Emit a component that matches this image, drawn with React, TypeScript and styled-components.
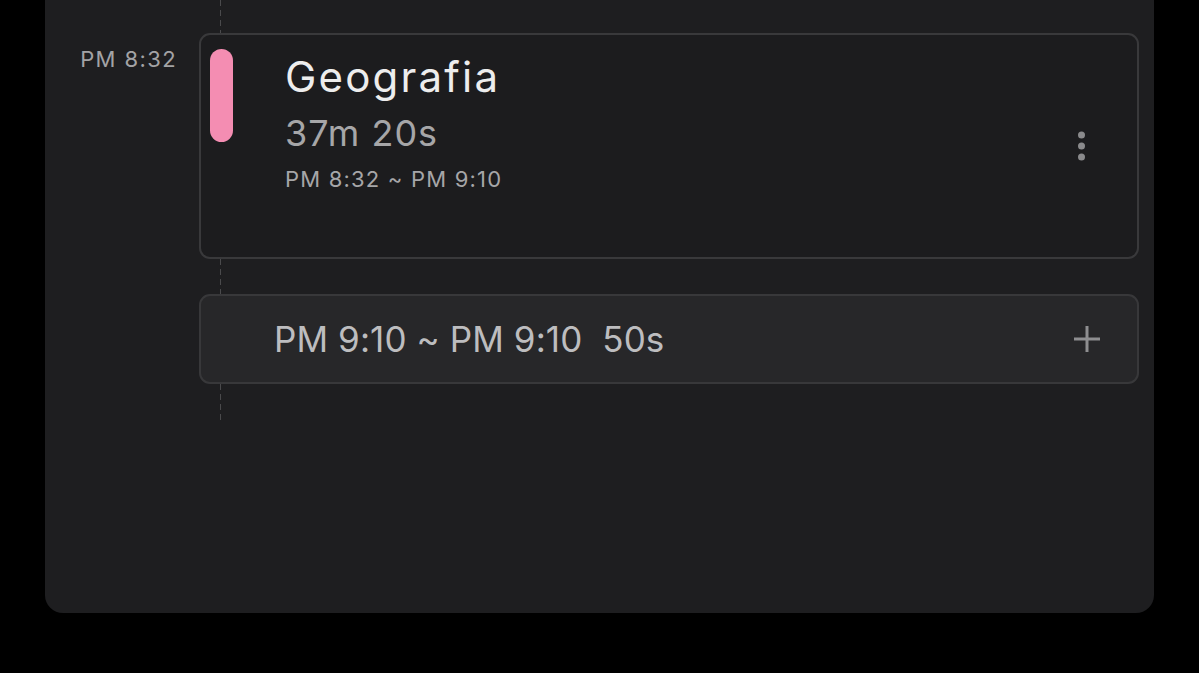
import React from "react";
import styled, { createGlobalStyle } from "styled-components";

const Global = createGlobalStyle`
  html, body { margin: 0; padding: 0; background: #000; }
  body { font-family: Inter, "Noto Sans", sans-serif; overflow: hidden; }
`;

const Page = styled.div`
  width: 1199px;
  height: 673px;
  background: #000;
  display: flex;
  align-items: flex-start;
  padding-left: 45px;
  box-sizing: border-box;
`;

const Panel = styled.div`
  width: 1109px;
  height: 613px;
  background: #1e1e20;
  border-radius: 0 0 18px 18px;
  display: flex;
  flex-direction: column;
`;

const ConnectorRow = styled.div<{ $h: number }>`
  height: ${(p) => p.$h}px;
  padding-left: 175px;
  display: flex;
`;

const Dash = styled.div`
  width: 1px;
  height: 100%;
  background: repeating-linear-gradient(
    to bottom,
    #4a4a4c 0 6px,
    transparent 6px 10px
  );
`;

const Row = styled.div`
  display: flex;
  align-items: flex-start;
`;

const TimeCol = styled.div`
  width: 154px;
  box-sizing: border-box;
  padding-right: 22px;
  padding-top: 13px;
  text-align: right;
  font-size: 22px;
  color: #a3a3a5;
  letter-spacing: 1.4px;
`;

const SessionCard = styled.div`
  width: 940px;
  height: 226px;
  box-sizing: border-box;
  border: 2px solid #39393b;
  border-radius: 11px;
  background: #1c1c1e;
  display: flex;
  align-items: flex-start;
  padding: 14px 0 0 9px;
  position: relative;
`;

const ColorBar = styled.div<{ $color: string }>`
  width: 23px;
  height: 93px;
  border-radius: 12px;
  background: ${(p) => p.$color};
  flex-shrink: 0;
`;

const Info = styled.div`
  margin-left: 52px;
  display: flex;
  flex-direction: column;
  flex: 1;
`;

const Title = styled.div`
  font-size: 42px;
  line-height: 56px;
  color: #ededed;
  font-weight: 400;
  letter-spacing: 2.2px;
`;

const Duration = styled.div`
  font-size: 36px;
  line-height: 40px;
  color: #a6a6a8;
  margin-top: 8px;
  letter-spacing: 1px;
`;

const Range = styled.div`
  font-size: 22px;
  line-height: 30px;
  color: #a6a6a8;
  margin-top: 11px;
  letter-spacing: 1.2px;
`;

const Kebab = styled.div`
  position: absolute;
  right: 52px;
  top: 50%;
  transform: translateY(-50%);
  display: flex;
  flex-direction: column;
  gap: 4px;
`;

const Dot = styled.span`
  width: 7px;
  height: 7px;
  border-radius: 50%;
  background: #8a8a8c;
`;

const Spacer = styled.div`
  width: 154px;
  flex-shrink: 0;
`;

const GapCard = styled.div`
  width: 940px;
  height: 90px;
  box-sizing: border-box;
  border: 2px solid #38383a;
  border-radius: 11px;
  background: #272729;
  display: flex;
  align-items: center;
  justify-content: space-between;
  padding: 0 36px 0 73px;
`;

const GapText = styled.div`
  font-size: 35px;
  color: #bdbdbf;
  letter-spacing: 0.1px;
  white-space: pre;
`;

const PlusIcon = () => (
  <svg width="28" height="28" viewBox="0 0 28 28">
    <path d="M14 1v26M1 14h26" stroke="#8e8e90" strokeWidth="3" />
  </svg>
);

export default function App() {
  return (
    <>
      <Global />
      <Page>
        <Panel>
          <ConnectorRow $h={33}>
            <Dash />
          </ConnectorRow>
          <Row>
            <TimeCol>PM 8:32</TimeCol>
            <SessionCard>
              <ColorBar $color="#f48db2" />
              <Info>
                <Title>Geografia</Title>
                <Duration>37m 20s</Duration>
                <Range>PM 8:32 ~ PM 9:10</Range>
              </Info>
              <Kebab>
                <Dot />
                <Dot />
                <Dot />
              </Kebab>
            </SessionCard>
          </Row>
          <ConnectorRow $h={35}>
            <Dash />
          </ConnectorRow>
          <Row>
            <Spacer />
            <GapCard>
              <GapText>{"PM 9:10 ~ PM 9:10  50s"}</GapText>
              <PlusIcon />
            </GapCard>
          </Row>
          <ConnectorRow $h={36}>
            <Dash />
          </ConnectorRow>
        </Panel>
      </Page>
    </>
  );
}
